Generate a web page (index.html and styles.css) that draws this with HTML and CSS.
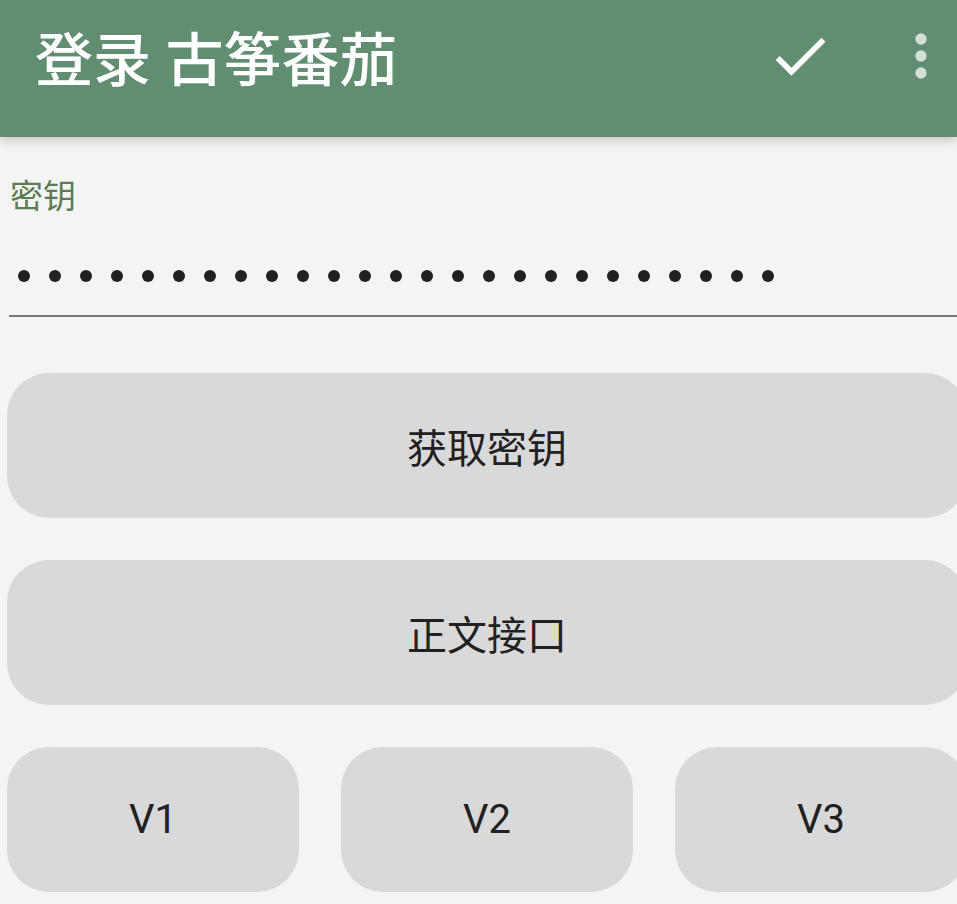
FILE: index.html
```html
<!DOCTYPE html>
<html lang="zh-CN">
<head>
    <meta charset="UTF-8">
    <meta name="viewport" content="width=device-width, initial-scale=1.0">
    <title>登录 古筝番茄</title>
    <link rel="stylesheet" href="styles.css">
</head>
<body>

    <header class="toolbar">
        <h1 class="toolbar-title">登录 古筝番茄</h1>
        <div class="toolbar-actions">
            <button class="icon-btn" type="button" title="确定">
                <svg viewBox="0 0 24 24" class="icon icon-check">
                    <path d="M9 16.17L4.83 12l-1.42 1.41L9 19 21 7l-1.41-1.41z"/>
                </svg>
            </button>
            <button class="icon-btn" type="button" title="更多">
                <svg viewBox="0 0 24 24" class="icon icon-more">
                    <circle cx="12" cy="6" r="2"/>
                    <circle cx="12" cy="12" r="2"/>
                    <circle cx="12" cy="18" r="2"/>
                </svg>
            </button>
        </div>
    </header>

    <main class="content">
        <div class="field">
            <label class="field-label">密钥</label>
            <div class="field-input" id="secret"></div>
        </div>

        <button class="pill-btn" type="button">获取密钥</button>
        <button class="pill-btn" type="button">正文接口</button>

        <div class="version-row">
            <button class="pill-btn" type="button">V1</button>
            <button class="pill-btn" type="button">V2</button>
            <button class="pill-btn" type="button">V3</button>
        </div>
    </main>

    <script>
        // Masked key: one dot per character
        var secret = document.getElementById('secret');
        for (var i = 0; i < 25; i++) {
            var dot = document.createElement('span');
            dot.className = 'dot';
            secret.appendChild(dot);
        }
    </script>

</body>
</html>
```

FILE: styles.css
```css
body {
    margin: 0;
    background-color: #f4f4f4;
    font-family: Roboto, 'Noto Sans CJK SC', sans-serif;
    color: #212121;
    overflow: hidden;
}

.toolbar {
    height: 137px;
    background-color: #618e70;
    display: flex;
    justify-content: space-between;
    align-items: flex-start;
    box-shadow: 0 4px 10px rgba(0, 0, 0, 0.18);
    position: relative;
}

.toolbar-title {
    margin: 0;
    padding: 32px 0 0 35px;
    font-size: 58px;
    font-weight: 500;
    line-height: 1;
    color: #fff;
}

.toolbar-actions {
    display: flex;
    gap: 53px;
    padding: 22px 2px 0 0;
}

.icon-btn {
    background: none;
    border: none;
    padding: 0;
    width: 68px;
    height: 68px;
    cursor: pointer;
}

.icon {
    width: 68px;
    height: 68px;
    display: block;
}

.icon-check {
    fill: #fff;
}

.icon-more {
    fill: rgba(255, 255, 255, 0.72);
}

.content {
    width: 960px;
    padding: 0 0 0 7px;
    display: flex;
    flex-direction: column;
    gap: 42px;
}

.field {
    padding-top: 40px;
    margin-bottom: 14px;
}

.field-label {
    display: block;
    margin-left: 3px;
    font-size: 33px;
    line-height: 40px;
    color: #5b7b52;
}

.field-input {
    margin-left: 2px;
    height: 78px;
    padding: 20px 0 0 9px;
    border-bottom: 2px solid #777;
    display: flex;
    align-items: center;
    gap: 19px;
}

.dot {
    width: 12px;
    height: 12px;
    border-radius: 50%;
    background-color: #212121;
    flex: none;
}

.pill-btn {
    height: 145px;
    border: none;
    border-radius: 42px;
    background-color: #d9d9d9;
    color: #212121;
    font-family: Roboto, 'Noto Sans CJK SC', sans-serif;
    font-size: 40px;
    cursor: pointer;
}

.version-row {
    display: grid;
    grid-template-columns: repeat(3, 1fr);
    gap: 42px;
}
```
